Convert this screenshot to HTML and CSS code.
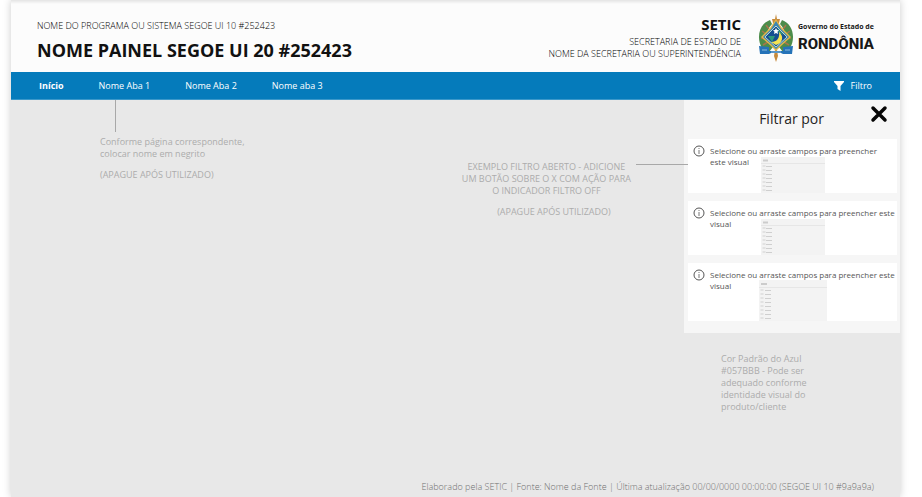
FILE: index.html
```html
<!DOCTYPE html>
<html lang="pt-BR">
<head>
<meta charset="utf-8">
<title>Nome Painel</title>
<link rel="stylesheet" href="styles.css">
</head>
<body>
<div class="report">
  <header class="header">
    <div class="titles">
      <p class="program">NOME DO PROGRAMA OU SISTEMA SEGOE UI 10 #252423</p>
      <h1 class="title">NOME PAINEL SEGOE UI 20 #252423</h1>
    </div>
    <div class="office">
      <h2 class="office-name">SETIC</h2>
      <p class="office-line">SECRETARIA DE ESTADO DE<br>NOME DA SECRETARIA OU SUPERINTENDÊNCIA</p>
    </div>
    <div class="brand">
      <svg class="crest" viewBox="0 0 36 48" aria-hidden="true">
        <path d="M12 6C1 10-2 24 4 34l7 4 4-5C7 28 7 17 14 10z" fill="#4c8c4a"/>
        <path d="M24 6c11 4 14 18 8 28l-7 4-4-5c8-5 8-16 1-23z" fill="#4c8c4a"/>
        <path d="M8 11l3 4M4 17l4 3M3 24l5 1M5 31l5-3M28 11l-3 4M32 17l-4 3M33 24l-5 1M31 31l-5-3" stroke="#a8754a" stroke-width="1.5"/>
        <path d="M18 0l1 5h3l-1 4h-6l-1-4h3zM17 36h2l1 6-2 6-2-6z" fill="#c78a3c"/>
        <path d="M1 32l10 1v4h14v-4l10-1-1 8h-9l-2-1H13l-2 1H2z" fill="#2573b8"/>
        <path d="M4 36h5m4 2h10m4-2h5" stroke="#8fbbdc"/>
        <path d="M18 5l6 9 9 9-9 8-6 6-6-6-9-8 9-9z" fill="#e2b847"/>
        <path d="M18 7l5 8 8 8-8 7-5 5-5-5-8-7 8-8z" fill="#3c86b4"/>
        <path d="M18 12l11 11-11 10L7 23z" fill="#174f91" stroke="#b9d5cf"/>
        <path d="M10 22h7l-3 6zM19 14l7 7-5-2z" fill="#2f9b79"/>
        <path d="M21 18c5 4 4 11-3 13l-5-3c6 0 9-4 8-10z" fill="#f4e354"/>
        <path d="M18 14l1 2 2 .3-1.500 1.500.5 2.200-2-1-2 1 .5-2.200L15 16.300l2-.3z" fill="#fff"/>
      </svg>
      <div class="brand-text">
        <span class="brand-small">Governo do Estado de</span>
        <span class="brand-large">RONDÔNIA</span>
      </div>
    </div>
  </header>

  <nav class="nav">
    <a class="tab active" href="#inicio">Início</a>
    <a class="tab" href="#aba1">Nome Aba 1</a>
    <a class="tab" href="#aba2">Nome Aba 2</a>
    <a class="tab" href="#aba3">Nome aba 3</a>
    <button class="filter-toggle" type="button">
      <svg class="funnel" viewBox="0 0 10 10" aria-hidden="true"><path d="M0 0h10v1L6.500 5v5L3.500 8V5L0 1z" fill="#fff"/></svg>
      Filtro
    </button>
  </nav>

  <main class="canvas">
    <section class="note tab-note">
      <p>Conforme página correspondente,<br>colocar nome em negrito</p>
      <p>(APAGUE APÓS UTILIZADO)</p>
    </section>
    <section class="note filter-note">
      <p>EXEMPLO FILTRO ABERTO - ADICIONE<br>UM BOTÃO SOBRE O X COM AÇÃO PARA<br>O INDICADOR FILTRO OFF</p>
      <p class="indented">(APAGUE APÓS UTILIZADO)</p>
    </section>
    <div class="connector"></div>
    <div class="side">
      <aside class="filters">
        <div class="filters-head">
          <h2 class="filters-title">Filtrar por</h2>
          <button class="close" type="button" aria-label="Fechar">
            <svg class="close-icon" viewBox="0 0 18 18" aria-hidden="true"><path d="M3 3l12 12M15 3L3 15" stroke="#050505" stroke-width="3.500" stroke-linecap="round"/></svg>
          </button>
        </div>
        <div class="card inset">
          <svg class="info" viewBox="0 0 12 12" aria-hidden="true"><circle cx="6" cy="6" r="5" fill="none" stroke="#555"/><path d="M6 5v4M6 3v1" stroke="#777"/></svg>
          <p class="hint">Selecione ou arraste campos para preencher este visual</p>
          <svg class="ghost" viewBox="0 0 64 36" preserveAspectRatio="none" aria-hidden="true"><path d="M0 0h64v36H0z" fill="#f3f3f3"/><path d="M0 6.500h64" stroke="#e6e6e6"/><path d="M2 3.500h5" stroke="#ccc" stroke-width="2"/><path d="M3 8v28" stroke="#e2e2e2" stroke-width="3" stroke-dasharray="2 2"/><path d="M8 9v27" stroke="#cfcfcf" stroke-width="6" stroke-dasharray="1 3"/></svg>
        </div>
        <div class="card">
          <svg class="info" viewBox="0 0 12 12" aria-hidden="true"><circle cx="6" cy="6" r="5" fill="none" stroke="#555"/><path d="M6 5v4M6 3v1" stroke="#777"/></svg>
          <p class="hint">Selecione ou arraste campos para preencher este visual</p>
          <svg class="ghost" viewBox="0 0 64 36" preserveAspectRatio="none" aria-hidden="true"><path d="M0 0h64v36H0z" fill="#f3f3f3"/><path d="M0 6.500h64" stroke="#e6e6e6"/><path d="M2 3.500h5" stroke="#ccc" stroke-width="2"/><path d="M3 8v28" stroke="#e2e2e2" stroke-width="3" stroke-dasharray="2 2"/><path d="M8 9v27" stroke="#cfcfcf" stroke-width="6" stroke-dasharray="1 3"/></svg>
        </div>
        <div class="card tall">
          <svg class="info" viewBox="0 0 12 12" aria-hidden="true"><circle cx="6" cy="6" r="5" fill="none" stroke="#555"/><path d="M6 5v4M6 3v1" stroke="#777"/></svg>
          <p class="hint">Selecione ou arraste campos para preencher este visual</p>
          <svg class="ghost" viewBox="0 0 68 41" preserveAspectRatio="none" aria-hidden="true"><path d="M0 0h68v41H0z" fill="#f3f3f3"/><path d="M0 7.500h68" stroke="#e6e6e6"/><path d="M2 4h6" stroke="#ccc" stroke-width="2"/><path d="M3 9v32" stroke="#e2e2e2" stroke-width="3" stroke-dasharray="2 2"/><path d="M9 10v31" stroke="#cfcfcf" stroke-width="6" stroke-dasharray="1 3"/></svg>
        </div>
      </aside>
      <p class="note color-note">Cor Padrão do Azul<br>#057BBB - Pode ser<br>adequado conforme<br>identidade visual do<br>produto/cliente</p>
    </div>
  </main>
  <footer class="footer">Elaborado pela SETIC | Fonte: Nome da Fonte | Última atualização 00/00/0000 00:00:00 (SEGOE UI 10 #9a9a9a)</footer>
</div>
</body>
</html>
```
FILE: styles.css
```css
* { box-sizing: border-box; }
body {
  margin: 0;
  background: #fff;
  font-family: "Open Sans", "Noto Sans", sans-serif;
  font-size: 9px;
  line-height: 12px;
  color: #252423;
}
h1, h2, p { margin: 0; }
button { border: 0; padding: 0; background: none; font: inherit; cursor: pointer; }
svg { display: block; }
.report {
  display: flex;
  flex-direction: column;
  min-height: 100vh;
  margin: 0 22px 0 11px;
  background: #e8e8e8;
  box-shadow: 0 0 8px #ccc;
}
.header {
  display: flex;
  align-items: flex-start;
  height: 72px;
  padding: 0 26px;
  background: linear-gradient(#e4e4e4, #fcfcfc 4px);
}
.titles { flex: 1; padding-top: 20px; }
.program { font-weight: 300; color: #000; }
.title { margin-top: 6px; font-size: 18px; line-height: 24px; font-weight: 700; color: #111; }
.office { padding-top: 14px; text-align: right; }
.office-name { font-size: 15px; line-height: 20px; color: #111; }
.office-line { margin-top: 2px; font-weight: 300; color: #000; }
.brand { display: flex; margin-left: 17px; padding-top: 14px; }
.crest { width: 36px; height: 48px; }
.brand-text { display: flex; flex-direction: column; margin: 7px 0 0 4px; color: #181818; }
.brand-small { font-size: 7px; line-height: 12px; font-weight: 700; }
.brand-large { font-family: Roboto, sans-serif; font-size: 15px; line-height: 22px; font-weight: 800; }
.nav {
  display: flex;
  align-items: center;
  gap: 35px;
  height: 28px;
  padding: 0 28px;
  background: #057bbb;
  border-bottom: 1px solid #3b98ca;
}
.tab { color: #fff; text-decoration: none; font-weight: 400; }
.tab.active { font-weight: 700; }
.filter-toggle { display: flex; align-items: center; gap: 7px; margin-left: auto; color: #fff; }
.funnel { width: 10px; height: 10px; }
.canvas { flex: 1; display: flex; align-items: flex-start; }
.note { color: #acacac; }
.note p + p { margin-top: 9px; }
.tab-note { margin-left: 89px; }
.tab-note::before {
  content: "";
  display: block;
  width: 1px;
  height: 32px;
  margin: 0 0 4px 15px;
  background: #a8a8a8;
}
.filter-note { margin: 61px 5px 0 auto; text-align: center; }
.indented { padding-left: 15px; }
.connector { width: 52px; height: 1px; margin: 64px -4px 0 0; background: #a8a8a8; z-index: 1; }
.side { width: 216px; }
.filters { padding: 0 3px 12px 4px; background: #f6f6f6; }
.filters-head { display: flex; align-items: flex-start; justify-content: flex-end; gap: 46px; height: 39px; padding: 5px 9px 0 0; }
.filters-title { padding-top: 2px; font-size: 14px; line-height: 24px; font-weight: 400; }
.close-icon { width: 18px; height: 18px; }
.card {
  position: relative;
  display: flex;
  gap: 5px;
  height: 54px;
  padding: 6px 0 0 5px;
  background: #fff;
}
.card + .card { margin-top: 8px; }
.inset { padding-right: 16px; }
.tall { height: 58px; }
.info { flex: none; width: 12px; height: 12px; }
.hint { position: relative; z-index: 1; font-size: 8px; line-height: 11px; color: #555; }
.ghost { position: absolute; left: 73px; bottom: 0; width: 64px; height: 36px; }
.tall .ghost { left: 71px; width: 68px; height: 41px; }
.color-note { margin: 20px 0 0 37px; }
.footer { padding: 0 26px 4px; text-align: right; font-weight: 300; color: #707070; }
```
